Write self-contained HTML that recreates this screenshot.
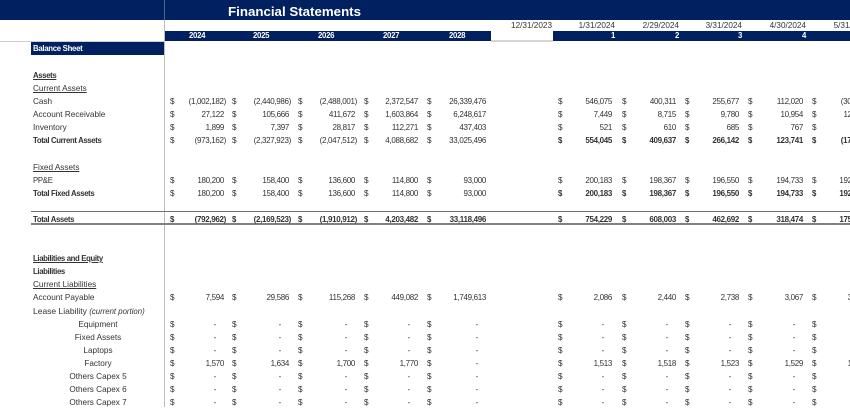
<!DOCTYPE html>
<html><head><meta charset="utf-8"><style>
html,body{margin:0;padding:0;background:#fff}
body{width:850px;height:407px;overflow:hidden;position:relative;font-family:"Liberation Sans",sans-serif;font-size:8.2px;color:#333}
.b{position:absolute;background:#002060}
.g{position:absolute;background:#bdbdbd}
.r{position:absolute;left:0;width:850px;height:13px;line-height:13px;white-space:nowrap;filter:blur(.35px)}
.r span{position:absolute;top:0}
.l{left:33px}.m{left:33px;width:130px;text-align:center}
.u{text-decoration:underline}
.t{font-weight:bold;font-size:7.8px;letter-spacing:-.37px}
.a0{left:170px}.a1{left:232px}.a2{left:298px}.a3{left:364px}.a4{left:427px}.a5{left:558px}.a6{left:622px}.a7{left:685px}.a8{left:748px}.a9{left:812px}
.n0{right:626px}.n1{right:561px}.n2{right:495px}.n3{right:432px}.n4{right:364px}.n5{right:238px}.n6{right:174px}.n7{right:111px}.n8{right:47px}.n9{right:-16px}
.n0,.n1,.n2,.n3,.n4,.n5,.n6,.n7,.n8,.n9{font-size:8px;letter-spacing:-.32px}
.p{margin-right:-2px}
.d{margin-right:8px}
.w{color:#fff;font-weight:bold;font-size:7.8px;letter-spacing:-.3px}
.nb{font-weight:normal}
</style></head><body>
<div class="b" style="left:0;top:0;width:850px;height:20px"></div>
<div class="g" style="left:164px;top:0;width:1px;height:407px"></div>
<div class="b" style="left:164px;top:0;width:1px;height:20px;background:#50628a"></div>
<div class="b" style="left:165px;top:31px;width:326px;height:10px"></div>
<div class="b" style="left:553px;top:31px;width:297px;height:10px"></div>
<div class="g" style="left:0;top:41px;width:164px;height:1px;background:#cfcfcf"></div>
<div class="g" style="left:491px;top:40px;width:62px;height:2px;background:#d5d5d5"></div>
<div class="b" style="left:31px;top:42px;width:133px;height:13px"></div>
<div class="g" style="left:31px;top:211px;width:819px;height:1px;background:#707070"></div>
<div class="g" style="left:31px;top:223px;width:819px;height:2px;background:#808080"></div>

<div class="r" style="top:4px;height:16px;line-height:16px"><span class="w" style="left:228px;font-size:13.3px;letter-spacing:0">Financial Statements</span></div>
<div class="r" style="top:19px"><span style="right:298px">12/31/2023</span><span style="right:235px">1/31/2024</span><span style="right:171px">2/29/2024</span><span style="right:108px">3/31/2024</span><span style="right:44px">4/30/2024</span><span style="right:-20px">5/31/2024</span></div>
<div class="r" style="top:29px"><span class="w" style="left:189px">2024</span><span class="w" style="left:253px">2025</span><span class="w" style="left:318px">2026</span><span class="w" style="left:383px">2027</span><span class="w" style="left:449px">2028</span><span class="w" style="right:235px">1</span><span class="w" style="right:171px">2</span><span class="w" style="right:108px">3</span><span class="w" style="right:44px">4</span></div>
<div class="r" style="top:42px"><span class="w l">Balance Sheet</span></div>
<div class="r" style="top:69px"><span class="l t u">Assets</span></div>
<div class="r" style="top:82px"><span class="l u">Current Assets</span></div>

<div class="r" style="top:95px"><span class="l">Cash</span><span class="a0">$</span><span class="n0 p">(1,002,182)</span><span class="a1">$</span><span class="n1 p">(2,440,986)</span><span class="a2">$</span><span class="n2 p">(2,488,001)</span><span class="a3">$</span><span class="n3">2,372,547</span><span class="a4">$</span><span class="n4">26,339,476</span><span class="a5">$</span><span class="n5">546,075</span><span class="a6">$</span><span class="n6">400,311</span><span class="a7">$</span><span class="n7">255,677</span><span class="a8">$</span><span class="n8">112,020</span><span class="a9">$</span><span class="n9 p">(30,000)</span></div>

<div class="r" style="top:108px"><span class="l">Account Receivable</span><span class="a0">$</span><span class="n0">27,122</span><span class="a1">$</span><span class="n1">105,666</span><span class="a2">$</span><span class="n2">411,672</span><span class="a3">$</span><span class="n3">1,603,864</span><span class="a4">$</span><span class="n4">6,248,617</span><span class="a5">$</span><span class="n5">7,449</span><span class="a6">$</span><span class="n6">8,715</span><span class="a7">$</span><span class="n7">9,780</span><span class="a8">$</span><span class="n8">10,954</span><span class="a9">$</span><span class="n9">12,300</span></div>

<div class="r" style="top:121px"><span class="l">Inventory</span><span class="a0">$</span><span class="n0">1,899</span><span class="a1">$</span><span class="n1">7,397</span><span class="a2">$</span><span class="n2">28,817</span><span class="a3">$</span><span class="n3">112,271</span><span class="a4">$</span><span class="n4">437,403</span><span class="a5">$</span><span class="n5">521</span><span class="a6">$</span><span class="n6">610</span><span class="a7">$</span><span class="n7">685</span><span class="a8">$</span><span class="n8">767</span><span class="a9">$</span></div>

<div class="r t" style="top:134px"><span class="l">Total Current Assets</span><span class="a0 nb" style="font-size:8.2px">$</span><span class="n0 p nb">(973,162)</span><span class="a1 nb" style="font-size:8.2px">$</span><span class="n1 p nb">(2,327,923)</span><span class="a2 nb" style="font-size:8.2px">$</span><span class="n2 p nb">(2,047,512)</span><span class="a3 nb" style="font-size:8.2px">$</span><span class="n3 nb">4,088,682</span><span class="a4 nb" style="font-size:8.2px">$</span><span class="n4 nb">33,025,496</span><span class="a5">$</span><span class="n5">554,045</span><span class="a6">$</span><span class="n6">409,637</span><span class="a7">$</span><span class="n7">266,142</span><span class="a8">$</span><span class="n8">123,741</span><span class="a9">$</span><span class="n9 p">(17,000)</span></div>

<div class="r" style="top:161px"><span class="l u">Fixed Assets</span></div>

<div class="r" style="top:174px"><span class="l" style="font-size:7.8px;letter-spacing:-.3px">PP&amp;E</span><span class="a0">$</span><span class="n0">180,200</span><span class="a1">$</span><span class="n1">158,400</span><span class="a2">$</span><span class="n2">136,600</span><span class="a3">$</span><span class="n3">114,800</span><span class="a4">$</span><span class="n4">93,000</span><span class="a5">$</span><span class="n5">200,183</span><span class="a6">$</span><span class="n6">198,367</span><span class="a7">$</span><span class="n7">196,550</span><span class="a8">$</span><span class="n8">194,733</span><span class="a9">$</span><span class="n9">192,917</span></div>

<div class="r" style="top:187px"><span class="l t">Total Fixed Assets</span><span class="a0">$</span><span class="n0">180,200</span><span class="a1">$</span><span class="n1">158,400</span><span class="a2">$</span><span class="n2">136,600</span><span class="a3">$</span><span class="n3">114,800</span><span class="a4">$</span><span class="n4">93,000</span><span class="a5 t">$</span><span class="n5 t">200,183</span><span class="a6 t">$</span><span class="n6 t">198,367</span><span class="a7 t">$</span><span class="n7 t">196,550</span><span class="a8 t">$</span><span class="n8 t">194,733</span><span class="a9 t">$</span><span class="n9 t">192,917</span></div>

<div class="r t" style="top:213px"><span class="l">Total Assets</span><span class="a0">$</span><span class="n0 p">(792,962)</span><span class="a1">$</span><span class="n1 p">(2,169,523)</span><span class="a2">$</span><span class="n2 p">(1,910,912)</span><span class="a3">$</span><span class="n3">4,203,482</span><span class="a4">$</span><span class="n4">33,118,496</span><span class="a5">$</span><span class="n5">754,229</span><span class="a6">$</span><span class="n6">608,003</span><span class="a7">$</span><span class="n7">462,692</span><span class="a8">$</span><span class="n8">318,474</span><span class="a9">$</span><span class="n9">175,917</span></div>

<div class="r" style="top:252px"><span class="l t u">Liabilities and Equity</span></div>
<div class="r" style="top:265px"><span class="l t">Liabilities</span></div>
<div class="r" style="top:278px"><span class="l u">Current Liabilities</span></div>

<div class="r" style="top:291px"><span class="l">Account Payable</span><span class="a0">$</span><span class="n0">7,594</span><span class="a1">$</span><span class="n1">29,586</span><span class="a2">$</span><span class="n2">115,268</span><span class="a3">$</span><span class="n3">449,082</span><span class="a4">$</span><span class="n4">1,749,613</span><span class="a5">$</span><span class="n5">2,086</span><span class="a6">$</span><span class="n6">2,440</span><span class="a7">$</span><span class="n7">2,738</span><span class="a8">$</span><span class="n8">3,067</span><span class="a9">$</span><span class="n9">3,444</span></div>

<div class="r" style="top:305px"><span class="l" style="font-size:8.5px">Lease Liability <i style="font-size:7.8px">(current portion)</i></span></div>

<div class="r" style="top:318px"><span class="m">Equipment</span><span class="a0">$</span><span class="n0 d">-</span><span class="a1">$</span><span class="n1 d">-</span><span class="a2">$</span><span class="n2 d">-</span><span class="a3">$</span><span class="n3 d">-</span><span class="a4">$</span><span class="n4 d">-</span><span class="a5">$</span><span class="n5 d">-</span><span class="a6">$</span><span class="n6 d">-</span><span class="a7">$</span><span class="n7 d">-</span><span class="a8">$</span><span class="n8 d">-</span><span class="a9">$</span></div>

<div class="r" style="top:331px"><span class="m">Fixed Assets</span><span class="a0">$</span><span class="n0 d">-</span><span class="a1">$</span><span class="n1 d">-</span><span class="a2">$</span><span class="n2 d">-</span><span class="a3">$</span><span class="n3 d">-</span><span class="a4">$</span><span class="n4 d">-</span><span class="a5">$</span><span class="n5 d">-</span><span class="a6">$</span><span class="n6 d">-</span><span class="a7">$</span><span class="n7 d">-</span><span class="a8">$</span><span class="n8 d">-</span><span class="a9">$</span></div>

<div class="r" style="top:344px"><span class="m">Laptops</span><span class="a0">$</span><span class="n0 d">-</span><span class="a1">$</span><span class="n1 d">-</span><span class="a2">$</span><span class="n2 d">-</span><span class="a3">$</span><span class="n3 d">-</span><span class="a4">$</span><span class="n4 d">-</span><span class="a5">$</span><span class="n5 d">-</span><span class="a6">$</span><span class="n6 d">-</span><span class="a7">$</span><span class="n7 d">-</span><span class="a8">$</span><span class="n8 d">-</span><span class="a9">$</span></div>

<div class="r" style="top:357px"><span class="m">Factory</span><span class="a0">$</span><span class="n0">1,570</span><span class="a1">$</span><span class="n1">1,634</span><span class="a2">$</span><span class="n2">1,700</span><span class="a3">$</span><span class="n3">1,770</span><span class="a4">$</span><span class="n4 d">-</span><span class="a5">$</span><span class="n5">1,513</span><span class="a6">$</span><span class="n6">1,518</span><span class="a7">$</span><span class="n7">1,523</span><span class="a8">$</span><span class="n8">1,529</span><span class="a9">$</span><span class="n9">1,534</span></div>

<div class="r" style="top:370px"><span class="m">Others Capex 5</span><span class="a0">$</span><span class="n0 d">-</span><span class="a1">$</span><span class="n1 d">-</span><span class="a2">$</span><span class="n2 d">-</span><span class="a3">$</span><span class="n3 d">-</span><span class="a4">$</span><span class="n4 d">-</span><span class="a5">$</span><span class="n5 d">-</span><span class="a6">$</span><span class="n6 d">-</span><span class="a7">$</span><span class="n7 d">-</span><span class="a8">$</span><span class="n8 d">-</span><span class="a9">$</span></div>

<div class="r" style="top:383px"><span class="m">Others Capex 6</span><span class="a0">$</span><span class="n0 d">-</span><span class="a1">$</span><span class="n1 d">-</span><span class="a2">$</span><span class="n2 d">-</span><span class="a3">$</span><span class="n3 d">-</span><span class="a4">$</span><span class="n4 d">-</span><span class="a5">$</span><span class="n5 d">-</span><span class="a6">$</span><span class="n6 d">-</span><span class="a7">$</span><span class="n7 d">-</span><span class="a8">$</span><span class="n8 d">-</span><span class="a9">$</span></div>

<div class="r" style="top:396px"><span class="m">Others Capex 7</span><span class="a0">$</span><span class="n0 d">-</span><span class="a1">$</span><span class="n1 d">-</span><span class="a2">$</span><span class="n2 d">-</span><span class="a3">$</span><span class="n3 d">-</span><span class="a4">$</span><span class="n4 d">-</span><span class="a5">$</span><span class="n5 d">-</span><span class="a6">$</span><span class="n6 d">-</span><span class="a7">$</span><span class="n7 d">-</span><span class="a8">$</span><span class="n8 d">-</span><span class="a9">$</span></div>
</body></html>
